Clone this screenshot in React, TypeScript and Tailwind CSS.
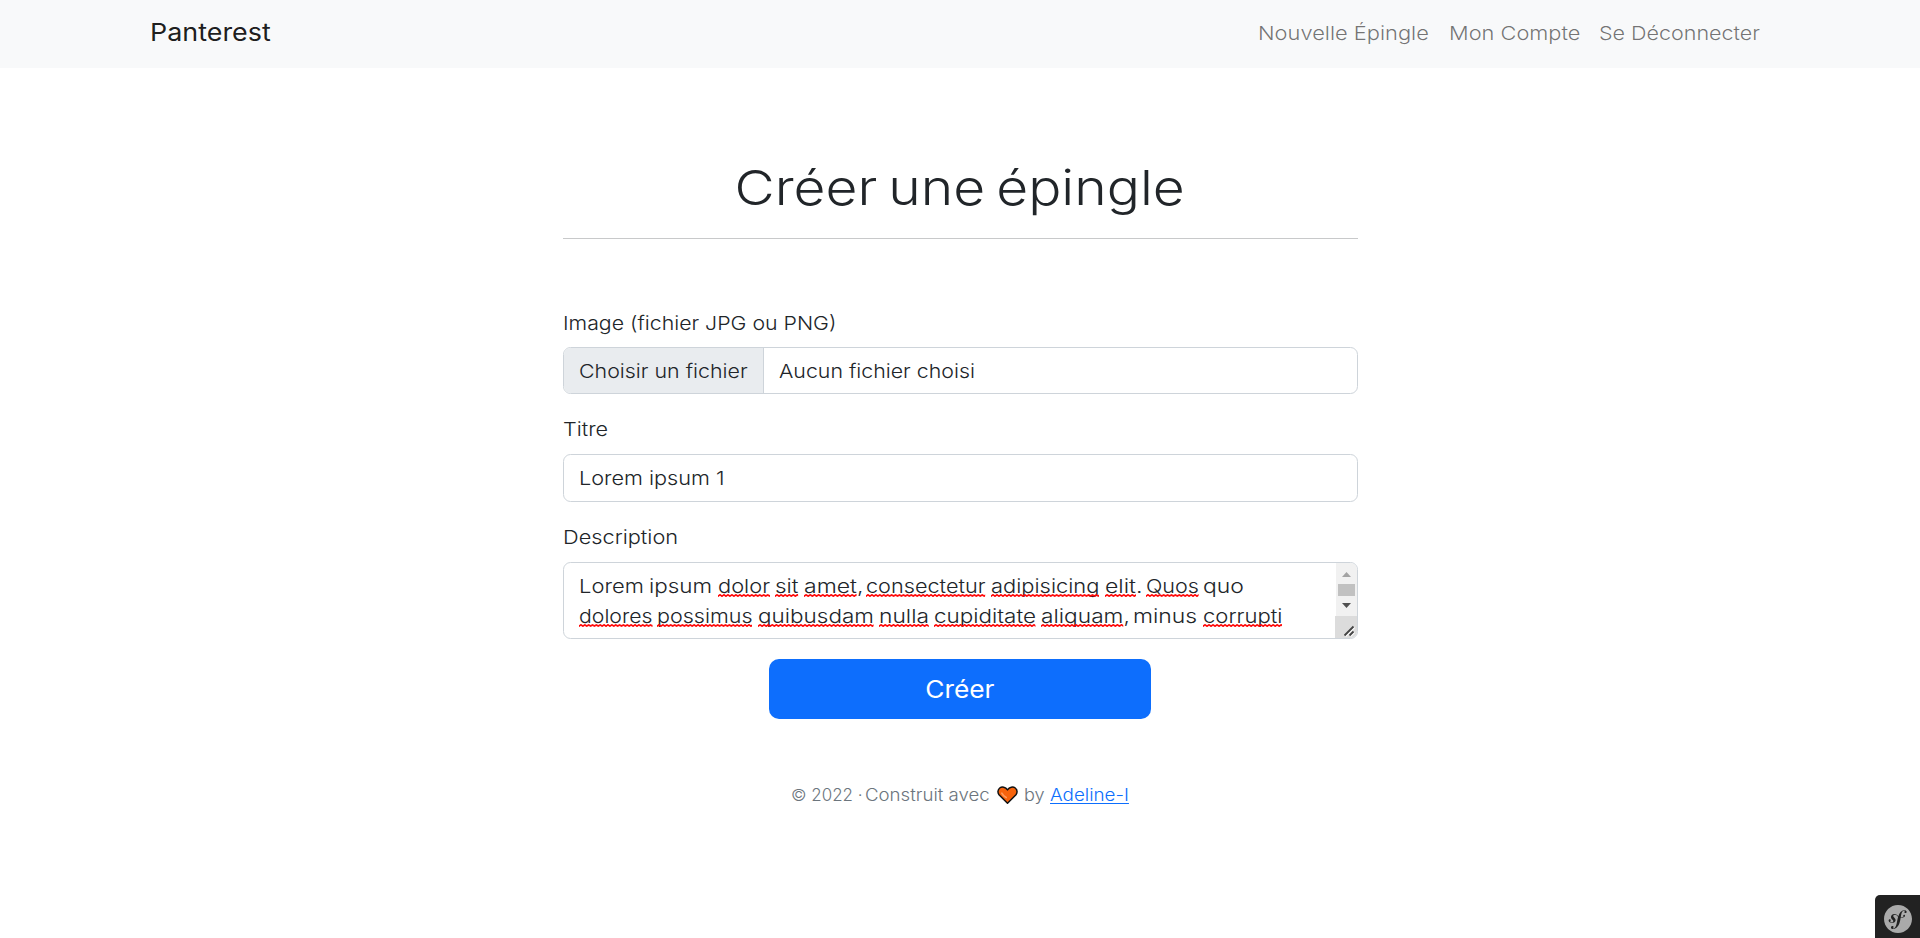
import React from "react";
import { SiSymfony } from "react-icons/si";

type Word = { text: string; box: string; scale: string; tail?: string; wrong?: boolean };

const lineOne: Word[] = [
  { text: "Lorem", box: "w-[70px]", scale: "scale-x-[1.14]" },
  { text: "ipsum", box: "w-[69px]", scale: "scale-x-[1.165]" },
  { text: "dolor", box: "w-[57px]", scale: "scale-x-[1.135]", wrong: true },
  { text: "sit", box: "w-[29px]", scale: "scale-x-[1.163]", wrong: true },
  { text: "amet", box: "w-[62.5px]", scale: "scale-x-[1.196]", tail: ",", wrong: true },
  { text: "consectetur", box: "w-[125px]", scale: "scale-x-[1.126]", wrong: true },
  { text: "adipisicing", box: "w-[114px]", scale: "scale-x-[1.137]", wrong: true },
  { text: "elit", box: "w-[40.5px]", scale: "scale-x-[1.197]", tail: ".", wrong: true },
  { text: "Quos", box: "w-[57.5px]", scale: "scale-x-[1.12]", wrong: true },
  { text: "quo", box: "w-[42px]", scale: "scale-x-[1.19]" },
];

const lineTwo: Word[] = [
  { text: "dolores", box: "w-[78.5px]", scale: "scale-x-[1.104]", wrong: true },
  { text: "possimus", box: "w-[100.5px]", scale: "scale-x-[1.118]", wrong: true },
  { text: "quibusdam", box: "w-[121px]", scale: "scale-x-[1.168]", wrong: true },
  { text: "nulla", box: "w-[55px]", scale: "scale-x-[1.185]", wrong: true },
  { text: "cupiditate", box: "w-[107.5px]", scale: "scale-x-[1.166]", wrong: true },
  { text: "aliquam", box: "w-[92px]", scale: "scale-x-[1.18]", tail: ",", wrong: true },
  { text: "minus", box: "w-[69.5px]", scale: "scale-x-[1.19]" },
  { text: "corrupti", box: "w-[84px]", scale: "scale-x-[1.146]", wrong: true },
];

function Wide({ scale, children }: { scale: string; children: React.ReactNode }) {
  return <span className={`inline-block origin-left whitespace-nowrap ${scale}`}>{children}</span>;
}

function Squiggle() {
  return (
    <svg className="absolute left-0 top-[23px] h-[3px] w-full" aria-hidden="true">
      <defs>
        <pattern id="squiggle" width="3.5" height="3" patternUnits="userSpaceOnUse">
          <path d="M-0.9 1.5 L0 2.3 L1.75 0.7 L3.5 2.3 L4.4 1.5" fill="none" stroke="#ff0000" strokeWidth="1.4" />
        </pattern>
      </defs>
      <rect width="100%" height="3" fill="url(#squiggle)" />
    </svg>
  );
}

function Line({ words }: { words: Word[] }) {
  return (
    <div className="flex h-[30px] whitespace-nowrap">
      {words.map((w) => (
        <span key={w.text} className={`shrink-0 ${w.box}`}>
          <Wide scale={w.scale}>
            <span className="relative inline-block">
              {w.text}
              {w.wrong && <Squiggle />}
            </span>
            {w.tail}
          </Wide>{" "}
        </span>
      ))}
    </div>
  );
}

function Navbar() {
  return (
    <nav className="flex h-[68px] items-center justify-between bg-[#f8f9fa] pl-[150px] pr-[160px]">
      <a className="pb-[2px] text-[24.2px] font-normal text-black/90"><Wide scale="scale-x-[1.112]">Panterest</Wide></a>
      <div className="flex whitespace-nowrap pb-[2px] text-black/55">
        <a className="w-[190.5px]"><Wide scale="scale-x-[1.135]">Nouvelle Épingle</Wide></a>
        <a className="w-[150.5px]"><Wide scale="scale-x-[1.133]">Mon Compte</Wide></a>
        <a className="w-[161px]"><Wide scale="scale-x-[1.117]">Se Déconnecter</Wide></a>
      </div>
    </nav>
  );
}

function Scrollbar() {
  return (
    <div className="flex w-[22px] shrink-0 flex-col items-end">
      <div className="flex w-[21px] grow flex-col items-center bg-[#f1f1f1]">
        <svg className="mt-[9px] h-[5px] w-[9px]" viewBox="0 0 9 5"><path d="M4.5 0 L9 5 H0 Z" fill="#a3a3a3" /></svg>
        <div className="mt-[7px] h-[12px] w-[17px] bg-[#c1c1c1]" />
        <svg className="mt-[7px] h-[5px] w-[9px]" viewBox="0 0 9 5"><path d="M0 0 H9 L4.5 5 Z" fill="#505050" /></svg>
      </div>
      <div className="h-[22px] w-[22px] bg-[#dcdcdc]">
        <svg className="h-[21px] w-[21px]" viewBox="0 0 21 21">
          <path d="M9.5 19.5 L18.5 10.5 M14.5 19.5 L18.5 15.5" stroke="#fff" strokeWidth="1.4" transform="translate(1 1)" />
          <path d="M9.5 19.5 L18.5 10.5 M14.5 19.5 L18.5 15.5" stroke="#444" strokeWidth="1.8" />
        </svg>
      </div>
    </div>
  );
}

function Heart() {
  return (
    <svg className="mt-[6px] h-[19px] w-[21px] shrink-0" viewBox="0 0 21 19">
      <path d="M10.5 17.3 L2 8.8 C0.4 6.8 0.7 3.6 2.7 2 C5 0.4 8.5 0.9 10.5 3.9 C12.5 0.9 16 0.4 18.3 2 C20.3 3.6 20.6 6.8 19 8.8 Z" fill="#f7630c" stroke="#111" strokeWidth="1.5" strokeLinejoin="round" />
      <path d="M4.8 7.2 C5.6 9 7.4 10.6 9.2 11.6" fill="none" stroke="#ff9a5c" strokeWidth="1.7" strokeLinecap="round" />
    </svg>
  );
}

export default function App() {
  return (
    <div className="flex h-[938px] flex-col overflow-hidden bg-white font-['Inter',sans-serif] text-[19.25px] font-light leading-[30px] text-[#212529]">
      <Navbar />
      <main className="mx-auto w-[795px] pt-[90px]">
        <h1 className="text-center text-[48.2px] font-light leading-[60px]">
          <span className="inline-block scale-x-[1.145] [word-spacing:-4px]">Créer une épingle</span>
        </h1>
        <hr className="mt-[20px] border-t border-[#c8c9ca]" />
        <form className="pt-[69px]">
          <label className="block h-[39px]"><Wide scale="scale-x-[1.106]">Image (fichier JPG ou PNG)</Wide></label>
          <div className="flex h-[47px] items-center overflow-hidden rounded-[7.5px] border border-[#ced4da]">
            <span className="flex h-full w-[200px] items-center border-r border-[#ced4da] bg-[#e9ecef] pl-[15px]"><Wide scale="scale-x-[1.11]">Choisir un fichier</Wide></span>
            <span className="pl-[15px]"><Wide scale="scale-x-[1.108]">Aucun fichier choisi</Wide></span>
          </div>
          <label className="mt-[20px] block h-[40px]"><Wide scale="scale-x-[1.12]">Titre</Wide></label>
          <div className="flex h-[48px] items-center rounded-[7.5px] border border-[#ced4da] pl-[15px]"><Wide scale="scale-x-[1.125]">Lorem ipsum 1</Wide></div>
          <label className="mt-[20px] block h-[40px]"><Wide scale="scale-x-[1.13]">Description</Wide></label>
          <div className="flex h-[77px] overflow-hidden rounded-[7.5px] border border-[#ced4da]">
            <div className="w-0 grow pl-[15px] pt-[8px]">
              <Line words={lineOne} />
              <Line words={lineTwo} />
            </div>
            <Scrollbar />
          </div>
          <button type="button" className="mx-auto mt-[20px] block h-[60px] w-[382px] rounded-[10px] bg-[#0d6efd] pt-[1px] text-[24.2px] font-normal text-white">
            <span className="inline-block scale-x-[1.09]">Créer</span>
          </button>
        </form>
      </main>
      <footer className="mx-auto mt-[61px] flex w-[338px] whitespace-nowrap text-[16.8px] text-[#6c757d]">
        <span className="w-[73.5px]"><Wide scale="scale-x-[1.01]">© 2022 ·</Wide></span>
        <span className="w-[132.5px]"><Wide scale="scale-x-[1.11]">Construit avec</Wide></span>
        <Heart />
        <span className="ml-[6px] w-[25.5px]"><Wide scale="scale-x-[1.08]">by</Wide></span>
        <a className="w-[79px] text-[#0d6efd]"><Wide scale="scale-x-[1.12]"><span className="underline underline-offset-2">Adeline-I</span></Wide></a>
      </footer>
      <div className="mt-auto flex h-[43px] w-[45px] justify-center self-end rounded-tl-[5px] bg-[#222] pt-[10px]">
        <SiSymfony className="h-[28px] w-[28px] text-[#aaa]" />
      </div>
    </div>
  );
}
